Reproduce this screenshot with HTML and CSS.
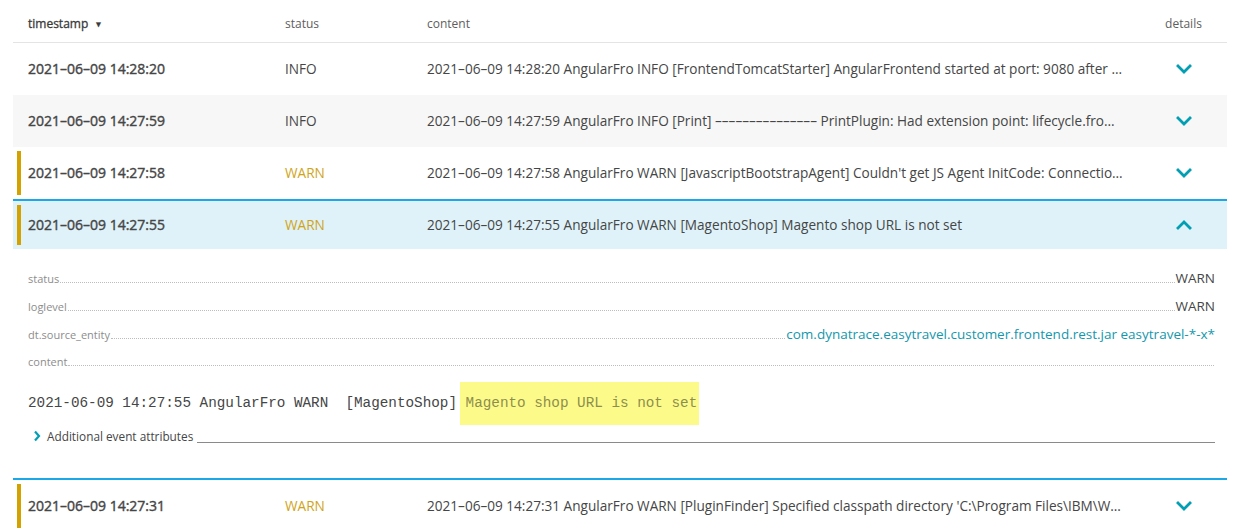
FILE: index.html
```html
<!DOCTYPE html>
<html>
<head>
<meta charset="utf-8">
<link rel="stylesheet" href="styles.css">
</head>
<body>
<div class="table">
  <div class="head">
    <div class="bar none"></div>
    <div class="c-ts h-sort">timestamp <span class="tri">&#9660;</span></div>
    <div class="c-st">status</div>
    <div class="c-ct">content</div>
    <div class="c-dt">details</div>
  </div>

  <div class="row">
    <div class="bar none"></div>
    <div class="c-ts ts">2021–06–09 14:28:20</div>
    <div class="c-st">INFO</div>
    <div class="c-ct">2021–06–09 14:28:20 AngularFro INFO [FrontendTomcatStarter] AngularFrontend started at port: 9080 after …</div>
    <div class="c-dt"><svg class="chev" viewBox="0 0 16 10" width="16" height="10"><polyline points="2,2 8,8 14,2"/></svg></div>
  </div>

  <div class="row alt">
    <div class="bar none"></div>
    <div class="c-ts ts">2021–06–09 14:27:59</div>
    <div class="c-st">INFO</div>
    <div class="c-ct">2021–06–09 14:27:59 AngularFro INFO [Print] ––––––––––––––– PrintPlugin: Had extension point: lifecycle.fro…</div>
    <div class="c-dt"><svg class="chev" viewBox="0 0 16 10" width="16" height="10"><polyline points="2,2 8,8 14,2"/></svg></div>
  </div>

  <div class="row">
    <div class="bar warn"></div>
    <div class="c-ts ts">2021–06–09 14:27:58</div>
    <div class="c-st warn-t">WARN</div>
    <div class="c-ct">2021–06–09 14:27:58 AngularFro WARN [JavascriptBootstrapAgent] Couldn't get JS Agent InitCode: Connectio…</div>
    <div class="c-dt"><svg class="chev" viewBox="0 0 16 10" width="16" height="10"><polyline points="2,2 8,8 14,2"/></svg></div>
  </div>

  <div class="row open">
    <div class="bar warn"></div>
    <div class="c-ts ts">2021–06–09 14:27:55</div>
    <div class="c-st warn-t">WARN</div>
    <div class="c-ct">2021–06–09 14:27:55 AngularFro WARN [MagentoShop] Magento shop URL is not set</div>
    <div class="c-dt"><svg class="chev" viewBox="0 0 16 10" width="16" height="10"><polyline points="2,8 8,2 14,8"/></svg></div>
  </div>

  <div class="details">
    <div class="kv"><span class="k">status</span><span class="dots"></span><span class="v">WARN</span></div>
    <div class="kv"><span class="k">loglevel</span><span class="dots"></span><span class="v">WARN</span></div>
    <div class="kv"><span class="k">dt.source_entity</span><span class="dots"></span><span class="v link">com.dynatrace.easytravel.customer.frontend.rest.jar easytravel-*-x*</span></div>
    <div class="kv"><span class="k">content</span><span class="dots"></span></div>
    <div class="mono">2021-06-09 14:27:55 AngularFro WARN  [MagentoShop] <span class="hl">Magento shop URL is not set</span></div>
    <div class="attrs">
      <svg class="rchev" viewBox="0 0 8 12" width="8" height="12"><polyline points="2,1.5 6,6 2,10.5"/></svg>
      <span class="attrs-t">Additional event attributes</span>
      <span class="attrs-line"></span>
    </div>
  </div>

  <div class="row sel-top">
    <div class="bar warn"></div>
    <div class="c-ts ts">2021–06–09 14:27:31</div>
    <div class="c-st warn-t">WARN</div>
    <div class="c-ct">2021–06–09 14:27:31 AngularFro WARN [PluginFinder] Specified classpath directory 'C:\Program Files\IBM\W…</div>
    <div class="c-dt"><svg class="chev" viewBox="0 0 16 10" width="16" height="10"><polyline points="2,2 8,8 14,2"/></svg></div>
  </div>
</div>
</body>
</html>
```

FILE: styles.css
```css
* { box-sizing: border-box; }
html, body { margin: 0; padding: 0; background: #fff; }
body {
  font-family: "Open Sans", "Liberation Sans", sans-serif;
  color: #454646;
  overflow: hidden;
}
.table {
  margin-left: 13px;
  width: 1214px;
}
.head, .row {
  display: flex;
  align-items: center;
}
.head {
  height: 43px;
  padding-top: 4px;
  border-bottom: 1px solid #e4e4e4;
  font-size: 12px;
  color: #5e5e5e;
}
.h-sort { color: #393939; -webkit-text-stroke: 0.3px #393939; }
.tri { font-size: 8px; margin-left: 3px; position: relative; top: -1px; }
.row {
  height: 52px;
  font-size: 13.6px;
  padding-bottom: 1px;
}
.row.alt { background: #f7f7f7; }
.row.open {
  height: 50px;
  background: #dff2f9;
  border-top: 2px solid #1ca8e8;
}
.row.sel-top { border-top: 2px solid #1ca8e8; height: 54px; }
.bar {
  width: 4px;
  align-self: stretch;
  margin: 4px 0 3px 4px;
  flex: none;
}
.bar.warn { background: #d3a200; }
.c-ts { width: 264px; padding-left: 7px; flex: none; }
.c-st { width: 142px; flex: none; }
.c-ct {
  flex: 1;
  min-width: 0;
  padding-right: 4px;
  white-space: nowrap;
  overflow: hidden;
  text-overflow: ellipsis;
}
.c-dt {
  width: 87px;
  flex: none;
  display: flex;
  justify-content: center;
  align-items: center;
}
.ts { font-size: 14px; color: #454646; -webkit-text-stroke: 0.4px #454646; }
.warn-t { color: #d0a418; }
.chev polyline {
  fill: none;
  stroke: #009fb4;
  stroke-width: 2.8;
  stroke-linecap: square;
}
.details {
  padding: 20px 12px 0 15px;
  height: 229px;
}
.kv {
  display: flex;
  align-items: baseline;
  height: 28px;
  line-height: 18px;
}
.k { font-size: 11px; color: #8d8d8d; }
.dots {
  flex: 1;
  border-bottom: 1px dotted #bdbdbd;
  margin: 0 1px;
}
.v { font-size: 13.5px; color: #454646; }
.v.link { color: #1497ac; }
.mono {
  font-family: "Liberation Mono", monospace;
  font-size: 14.3px;
  color: #454646;
  height: 46px;
  padding-top: 14px;
  white-space: pre;
}
.hl {
  background: #fcfb8a;
  color: #8e8e4c;
  padding: 13px 2px 14px 6px;
  margin-left: -6px;
}
.attrs {
  display: flex;
  align-items: center;
  height: 18px;
  padding-left: 5px;
}
.rchev polyline {
  fill: none;
  stroke: #009fb4;
  stroke-width: 2.2;
}
.attrs-t { font-size: 11.8px; color: #454646; margin-left: 6px; }
.attrs-line {
  flex: 1;
  border-bottom: 1px solid #8a8a8a;
  margin-left: 4px;
  position: relative;
  top: 6px;
}
```
